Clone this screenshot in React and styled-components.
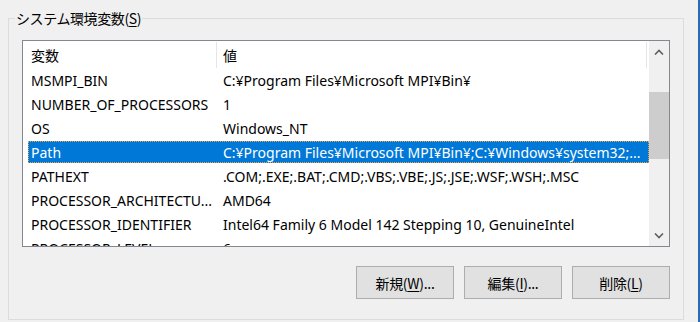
import React from "react";
import styled, { createGlobalStyle } from "styled-components";

const Global = createGlobalStyle`
  html, body { margin: 0; padding: 0; }
  body {
    background: #f0f0f0;
    width: 700px;
    height: 322px;
    overflow: hidden;
    font-family: "Noto Sans", "Noto Sans CJK JP", sans-serif;
    color: #000;
  }
`;

const Window = styled.div`
  display: flex;
  width: 700px;
  height: 322px;
`;

const Main = styled.div`
  flex: 1;
  padding-left: 8px;
  padding-right: 14px;
`;

const Edge = styled.div`
  width: 2px;
  background: #2b6cb0;
`;

const Group = styled.fieldset`
  margin: 8px 0 0 0;
  padding: 12px 13px 20px 13px;
  border: 1px solid #dcdcdc;
  min-width: 0;
  height: 312px;
  box-sizing: border-box;
  display: flex;
  flex-direction: column;
`;

const Legend = styled.legend`
  margin-left: -7px;
  padding: 0 1px;
  font-size: 14px;
  line-height: 20px;
  height: 20px;
  font-family: "Noto Sans CJK JP", sans-serif;
  letter-spacing: -0.4px;
`;

const Key = styled.span`
  text-decoration: underline;
  text-underline-offset: 2px;
`;

const List = styled.div`
  border: 1px solid #828790;
  background: #fff;
  height: 207px;
  flex: none;
  box-sizing: border-box;
  display: flex;
  overflow: hidden;
`;

const Rows = styled.div`
  flex: 1;
  display: flex;
  flex-direction: column;
  overflow: hidden;
  font-size: 14px;
`;

const Header = styled.div`
  display: flex;
  height: 27px;
  flex: none;
  font-family: "Noto Sans CJK JP", sans-serif;
  font-size: 14px;
`;

const HeadCell = styled.div`
  width: ${(p) => p.$w}px;
  flex: ${(p) => (p.$w ? "none" : "1")};
  box-sizing: border-box;
  padding: 0 0 0 ${(p) => p.$pad}px;
  display: flex;
  align-items: center;
  border-right: ${(p) => (p.$line ? "1px solid #e5e5e5" : "none")};
  margin: 1px 0 0 0;
`;

const Row = styled.div`
  display: flex;
  height: 24px;
  flex: none;
  align-items: center;
  padding: 1px 0 1px 5px;
  box-sizing: border-box;
`;

const RowInner = styled.div`
  display: flex;
  align-items: center;
  flex: 1;
  height: 100%;
  background: ${(p) => (p.$sel ? "#0078d7" : "transparent")};
  color: ${(p) => (p.$sel ? "#fff" : "#000")};
  outline: ${(p) => (p.$sel ? "1px dotted #f3a13a" : "none")};
  outline-offset: -1px;
`;

const Cell = styled.div`
  width: ${(p) => p.$w}px;
  flex: ${(p) => (p.$w ? "none" : "1")};
  padding-left: ${(p) => p.$pad}px;
  box-sizing: border-box;
  white-space: nowrap;
  overflow: hidden;
`;

const Scroll = styled.div`
  width: 20px;
  flex: none;
  background: #f0f0f0;
  display: flex;
  flex-direction: column;
`;

const Arrow = styled.div`
  height: 21px;
  flex: none;
  display: flex;
  align-items: center;
  justify-content: center;
`;

const Track = styled.div`
  flex: 1;
  padding-top: 30px;
`;

const Thumb = styled.div`
  height: 67px;
  background: #cdcdcd;
`;

const Buttons = styled.div`
  display: flex;
  justify-content: flex-end;
  gap: 10px;
  margin-top: 19px;
`;

const Button = styled.button`
  width: 98px;
  height: 33px;
  flex: none;
  background: #e1e1e1;
  border: 1px solid #adadad;
  font-family: "Noto Sans CJK JP", sans-serif;
  font-size: 14px;
  color: #000;
  padding: 0;
  letter-spacing: -0.3px;
`;

const Chevron = ({ up }) => (
  <svg width="10" height="6" viewBox="0 0 10 6">
    <path
      d={up ? "M1 5.5 L5 1.5 L9 5.5" : "M1 0.5 L5 4.5 L9 0.5"}
      fill="none"
      stroke="#606060"
      strokeWidth="1.6"
    />
  </svg>
);

const rows = [
  ["MSMPI_BIN", "C:¥Program Files¥Microsoft MPI¥Bin¥"],
  ["NUMBER_OF_PROCESSORS", "1"],
  ["OS", "Windows_NT"],
  ["Path", "C:¥Program Files¥Microsoft MPI¥Bin¥;C:¥Windows¥system32;...", true],
  ["PATHEXT", ".COM;.EXE;.BAT;.CMD;.VBS;.VBE;.JS;.JSE;.WSF;.WSH;.MSC"],
  ["PROCESSOR_ARCHITECTU...", "AMD64"],
  ["PROCESSOR_IDENTIFIER", "Intel64 Family 6 Model 142 Stepping 10, GenuineIntel"],
  ["PROCESSOR_LEVEL", "6"],
];

export default function App() {
  return (
    <>
      <Global />
      <Window>
        <Main>
          <Group>
            <Legend>
              システム環境変数(<Key>S</Key>)
            </Legend>
            <List>
              <Rows>
                <Header>
                  <HeadCell $w={194} $pad={8} $line>変数</HeadCell>
                  <HeadCell $w={430} $pad={6} $line>値</HeadCell>
                </Header>
                {rows.map(([k, v, sel]) => (
                  <Row key={k}>
                    <RowInner $sel={sel}>
                      <Cell $w={189} $pad={3}>{k}</Cell>
                      <Cell $pad={6}>{v}</Cell>
                    </RowInner>
                  </Row>
                ))}
              </Rows>
              <Scroll>
                <Arrow><Chevron up /></Arrow>
                <Track><Thumb /></Track>
                <Arrow><Chevron /></Arrow>
              </Scroll>
            </List>
            <Buttons>
              <Button>新規(<Key>W</Key>)...</Button>
              <Button>編集(<Key>I</Key>)...</Button>
              <Button>削除(<Key>L</Key>)</Button>
            </Buttons>
          </Group>
        </Main>
        <Edge />
      </Window>
    </>
  );
}
